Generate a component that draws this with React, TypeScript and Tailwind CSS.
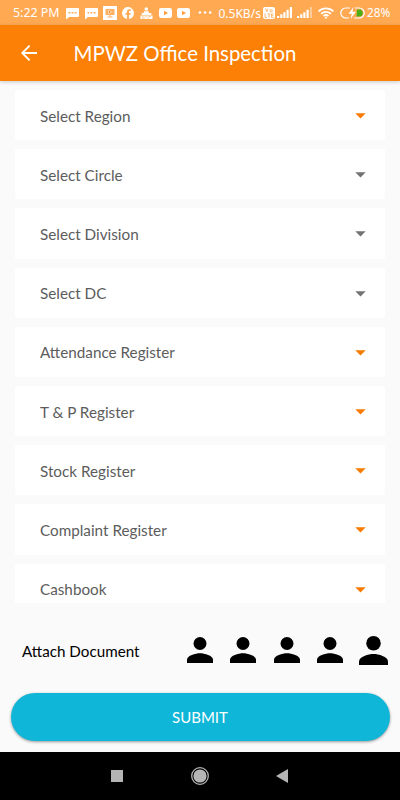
import React from "react";

const fields = [
  { label: "Select Region", tone: "fill-[#f57c00]" },
  { label: "Select Circle", tone: "fill-[#737373]" },
  { label: "Select Division", tone: "fill-[#737373]" },
  { label: "Select DC", tone: "fill-[#737373]" },
  { label: "Attendance Register", tone: "fill-[#f57c00]" },
  { label: "T & P Register", tone: "fill-[#f57c00]" },
  { label: "Stock Register", tone: "fill-[#f57c00]" },
  { label: "Complaint Register", tone: "fill-[#f57c00]" },
  { label: "Cashbook", tone: "fill-[#f57c00]" },
];

function Message({ className }: { className: string }) {
  return (
    <svg className={`shrink-0 ${className}`} width="13" height="12" viewBox="0 0 13 12">
      <path fill="#fff" d="M1 0h11q1 0 1 1v7q0 1-1 1H3l-3 2.500V1q0-1 1-1z" />
      <path fill="#ffa953" d="M2.500 4h1.800v1.500H2.500zM5.600 4h1.800v1.500H5.600zM8.700 4h1.800v1.500H8.700z" />
    </svg>
  );
}

function Video({ className }: { className: string }) {
  return (
    <svg className={`shrink-0 ${className}`} width="13" height="10" viewBox="0 0 13 10">
      <rect width="13" height="10" rx="2.200" fill="#fff" />
      <path d="M5 2.700v4.600L9 5z" fill="#ff9d3c" />
    </svg>
  );
}

function Signal({ className, weak }: { className: string; weak?: boolean }) {
  return (
    <svg className={`shrink-0 ${className}`} width="16" height="11" viewBox="0 0 16 11" fill="#fff">
      <path d="M0 9h2.200v2H0zM3.200 7.300h2.200V11H3.200zM6.300 5.300h2.200V11H6.300zM9.500 2.800h2.200V11H9.500z" />
      <path d="M12.800 0H15v11h-2.200z" opacity={weak ? 0.4 : 1} />
    </svg>
  );
}

function StatusBar() {
  return (
    <div className="flex h-[25px] shrink-0 items-center bg-[#ffa953] font-['Noto_Sans',sans-serif] text-[12px] text-white">
      <span className="ml-[13px] mt-[2px] w-[47px] shrink-0 whitespace-nowrap text-[12.400px] leading-none">5:22 PM</span>
      <Message className="ml-[6px] mt-[2px]" />
      <Message className="ml-[5.500px] mt-[2px]" />
      <svg className="ml-[5px] shrink-0" width="14" height="14" viewBox="0 0 14 14">
        <path fill="#fff" d="M0 0h14v14H0z" />
        <path d="M2.500 3h9v6h-9z" fill="#ffb061" />
        <path d="M4.500 10.500h5v1h-5zM6.500 9h1v2h-1z" fill="#ffb061" />
        <path d="M5.500 4v4L9 6z" fill="#fff" />
        <path d="M6 4.800v2.400L8 6z" fill="#ff7a10" />
      </svg>
      <svg className="ml-[5px] shrink-0" width="12" height="12" viewBox="0 0 24 24">
        <path fill="#fff" d="M24 12a12 12 0 1 0-13.900 11.900v-8.400H7V12h3.100V9.400C10.100 6.300 12 4.600 14.700 4.600c1.300 0 2.700.3 2.700.3v2.900h-1.500c-1.500 0-2 .9-2 1.900V12h3.400l-.5 3.500h-2.900v8.400A12 12 0 0 0 24 12z" />
      </svg>
      <svg className="ml-[6.500px] shrink-0" width="13" height="12" viewBox="0 0 13 12" fill="#fff">
        <circle cx="6.300" cy="2" r="1.800" />
        <path d="M3.800 4.300h5V6h2.500v2H1.800V6h2zM.5 8.500h12V12H.5z" />
        <path d="M2 9.600h1.500M5 9.600h1.500M8 9.600h3M2 11h3M7 11h1.500" stroke="#ffa953" strokeWidth=".6" />
      </svg>
      <Video className="ml-[6px]" />
      <Video className="ml-[5px]" />
      <svg className="ml-[8px] shrink-0" width="15" height="3" viewBox="0 0 15 3" fill="#fff">
        <circle cx="1.900" cy="1.500" r="1.300" /><circle cx="7" cy="1.500" r="1.300" /><circle cx="12.200" cy="1.500" r="1.300" />
      </svg>
      <span className="ml-[5.500px] mt-[2px] w-[42px] shrink-0 whitespace-nowrap text-[12px] leading-none">0.5KB/s</span>
      <svg className="ml-[2px] shrink-0" width="12" height="12" viewBox="0 0 12 12">
        <rect width="12" height="12" rx="2" fill="#fff" />
        <path d="M2.500 1.500l1.300 3.300 1.300-3.300M2 6.500v4h2M4.500 7h3M6 7v3.500M10.500 7H8.500v3.500h2M8.500 8.700h2" fill="none" stroke="#ffb163" strokeWidth=".9" />
        <circle cx="8.200" cy="3.800" r="1.200" fill="none" stroke="#ffb163" strokeWidth=".9" />
      </svg>
      <Signal className="ml-[2.500px]" />
      <Signal className="ml-[4px]" weak />
      <svg className="ml-[4.500px] shrink-0" width="16" height="12" viewBox="0 0 16 12" fill="none" stroke="#fff" strokeWidth="1.700">
        <path d="M.6 4.400a10.600 10.600 0 0 1 14.800 0M3.100 6.900a7 7 0 0 1 9.800 0M5.500 9.200a3.600 3.600 0 0 1 5 0" />
        <circle cx="8" cy="10.700" r="1" fill="#fff" stroke="none" />
      </svg>
      <svg className="ml-[6px] shrink-0" width="25" height="12" viewBox="0 0 25 12">
        <path d="M10 1H5.800a5 5 0 0 0 0 10H9M15 1h4.200a5 5 0 0 1 0 10H14" fill="none" stroke="#fff" strokeWidth="1.200" />
        <path d="M17 2.500h2.200a3.500 3.500 0 0 1 0 7H16.500z" fill="#4cae15" />
        <path d="M13.500 0L8.500 6.800h3.300L10.500 12l5.500-7.300h-3.500z" fill="#fff" />
      </svg>
      <span className="ml-[2.500px] whitespace-nowrap text-[11.800px] leading-none">28%</span>
    </div>
  );
}

function Person({ large }: { large?: boolean }) {
  return (
    <svg className="shrink-0" width={large ? 29 : 26} height={large ? 29 : 26} viewBox="0 0 26 26">
      <circle cx="13" cy="6.500" r="6.500" />
      <path d="M0 26v-3.200C0 18.500 8.600 16.200 13 16.200s13 2.300 13 6.600V26z" />
    </svg>
  );
}

export default function App() {
  return (
    <div className="flex h-[800px] w-[400px] flex-col overflow-hidden bg-[#fafafa] font-['Lato',sans-serif]">
      <StatusBar />
      <header className="flex h-14 shrink-0 items-center bg-[#fb8005] text-white shadow-[0_1px_4px_rgba(0,0,0,0.2)]">
        <svg className="ml-[20.500px] shrink-0" width="16" height="16" viewBox="0 0 16 16" fill="none" stroke="#fff" strokeWidth="1.900">
          <path d="M16 8H1.500M8.600.7L1.300 8l7.300 7.300" />
        </svg>
        <h1 className="mt-px ml-[37px] whitespace-nowrap text-[20.400px] leading-none">MPWZ Office Inspection</h1>
      </header>
      <main className="mx-[15px] mt-[9px] flex h-[513px] shrink-0 flex-col gap-[9px] overflow-hidden">
        {fields.map(({ label, tone }) => (
          <div key={label} className="flex h-[50.200px] shrink-0 items-center justify-between rounded-[2px] bg-white pl-[25px] pr-[19px]">
            <span className="mt-px text-[15.250px] leading-5 text-[#5c5c5c]">{label}</span>
            <svg className={`mt-[2px] ${tone}`} width="11" height="6" viewBox="0 0 11 6"><path d="M.3.300h10.400L5.500 5.500z" /></svg>
          </div>
        ))}
      </main>
      <section className="flex h-[90px] shrink-0 items-center pl-[22px]">
        <span className="mt-[5px] w-[165px] shrink-0 text-[15.200px] leading-5 text-black">Attach Document</span>
        <div className="mt-[4px] flex items-center gap-[17.300px]">
          <Person /><Person /><Person /><Person />
          <div className="-ml-[1.500px] flex"><Person large /></div>
        </div>
      </section>
      <button className="mx-[10.500px] h-12 shrink-0 rounded-full bg-[#0fb6d8] text-[15px] text-white shadow-[0_1px_3px_rgba(0,0,0,0.4)]">SUBMIT</button>
      <nav className="mt-auto flex h-[48.500px] shrink-0 items-center bg-black">
        <div className="ml-[111px] size-3 bg-[#b5b5b5]" />
        <svg className="ml-[68px]" width="18" height="18" viewBox="0 0 18 18">
          <circle cx="9" cy="9" r="8.300" fill="none" stroke="#b5b5b5" strokeWidth="1.300" />
          <circle cx="9" cy="9" r="6.600" fill="#b5b5b5" />
        </svg>
        <svg className="ml-[67px]" width="12" height="14" viewBox="0 0 12 14"><path d="M12 0v14L0 7z" fill="#b5b5b5" /></svg>
      </nav>
    </div>
  );
}
